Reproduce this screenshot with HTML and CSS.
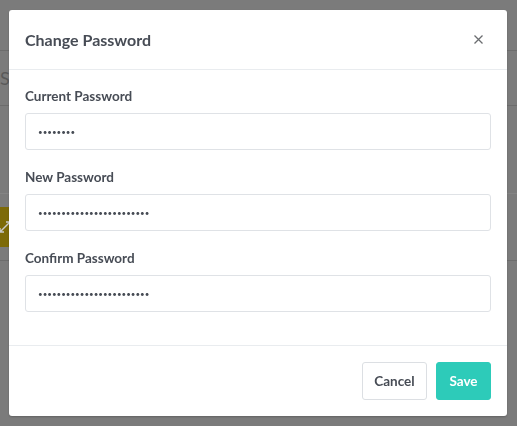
FILE: index.html
```html
<!DOCTYPE html>
<html lang="en">
<head>
<meta charset="utf-8">
<title>Change Password</title>
<link rel="stylesheet" href="styles.css">
</head>
<body>
<div class="page">
  <div class="page-top"></div>
  <div class="page-row"><span class="page-text">Sl</span></div>
  <div class="page-gap"></div>
  <div class="page-row2"><span class="page-btn"><svg width="14" height="14" viewBox="0 0 14 14"><path d="M2 12 L12 2 M8 2 H12 V6 M2 8 V12 H6" fill="none" stroke="#c9c9c9" stroke-width="1.4"/></svg></span></div>
</div>
<div class="backdrop">
  <div class="modal">
    <div class="modal-header">
      <h4 class="modal-title">Change Password</h4>
      <button class="close" type="button" aria-label="Close"><svg width="9" height="9" viewBox="0 0 9 9"><path d="M0.5 0.5 L8.5 8.5 M8.5 0.5 L0.5 8.5" stroke="#6b6d70" stroke-width="1.3" fill="none"/></svg></button>
    </div>
    <div class="modal-body">
      <div class="form-group">
        <label class="form-label">Current Password</label>
        <input class="form-control" type="password" value="12345678">
      </div>
      <div class="form-group">
        <label class="form-label">New Password</label>
        <input class="form-control" type="password" value="123456789012345678901234">
      </div>
      <div class="form-group">
        <label class="form-label">Confirm Password</label>
        <input class="form-control" type="password" value="123456789012345678901234">
      </div>
    </div>
    <div class="modal-footer">
      <button class="btn btn-default" type="button">Cancel</button>
      <button class="btn btn-primary" type="button">Save</button>
    </div>
  </div>
</div>
</body>
</html>
```
FILE: styles.css
```css
html, body {
  margin: 0;
  padding: 0;
  height: 100%;
}
body {
  background: #7b7b7b;
  font-family: Lato, "Open Sans", sans-serif;
  color: #474c55;
  overflow: hidden;
}
.page {
  display: flex;
  flex-direction: column;
}
.page-top {
  height: 50px;
  border-bottom: 1px solid #6c6c6c;
}
.page-row {
  height: 54px;
  border-bottom: 1px solid #6c6c6c;
  display: flex;
  align-items: center;
}
.page-text {
  margin-left: 0;
  font-size: 18px;
  color: #5a5a5a;
}
.page-gap {
  height: 87px;
  border-bottom: 1px solid #848484;
}
.page-row2 {
  height: 66px;
  border-bottom: 1px solid #6c6c6c;
  display: flex;
  align-items: center;
}
.page-btn {
  width: 40px;
  height: 40px;
  margin-left: -20px;
  background: #7d6a08;
  display: flex;
  align-items: center;
  justify-content: flex-end;
  padding-right: 8px;
  box-sizing: border-box;
}
.backdrop {
  position: fixed;
  inset: 0;
  padding: 10px 0 0 9px;
}
.modal {
  width: 498px;
  background: #fff;
  border-radius: 3px;
  box-shadow: 0 1px 2px rgba(0,0,0,0.2);
}
.modal-header {
  display: flex;
  align-items: center;
  justify-content: space-between;
  padding: 16px;
  border-bottom: 1px solid #e9ecef;
}
.modal-title {
  margin: 0;
  font-size: 16px;
  line-height: 27px;
  font-weight: 700;
  color: #474c55;
}
.close {
  border: 0;
  background: none;
  padding: 0;
  margin-right: 8px;
  width: 9px;
  height: 9px;
  display: flex;
}
.modal-body {
  padding: 16px;
  display: flex;
  flex-direction: column;
}
.form-group {
  display: flex;
  flex-direction: column;
  margin-bottom: 17px;
}
.form-label {
  font-size: 13.5px;
  line-height: 21px;
  font-weight: 700;
  color: #474c55;
  margin-bottom: 6px;
}
.form-control {
  box-sizing: border-box;
  height: 37px;
  border: 1px solid #dfe2e6;
  border-radius: 3px;
  padding: 0 12px;
  font-family: Lato, sans-serif;
  font-size: 8px;
  color: #474c55;
  outline: none;
}
.modal-footer {
  border-top: 1px solid #e9ecef;
  padding: 16px;
  display: flex;
  justify-content: flex-end;
  gap: 9px;
}
.btn {
  box-sizing: border-box;
  height: 38px;
  border-radius: 3px;
  font-family: Lato, sans-serif;
  font-size: 13.5px;
  font-weight: 700;
  padding: 0 10px;
}
.btn-default {
  width: 65px;
  background: #fff;
  border: 1px solid #dcdfe3;
  color: #474c55;
}
.btn-primary {
  width: 55px;
  background: #2dcbb9;
  border: 1px solid #2dcbb9;
  color: #fff;
}
```
